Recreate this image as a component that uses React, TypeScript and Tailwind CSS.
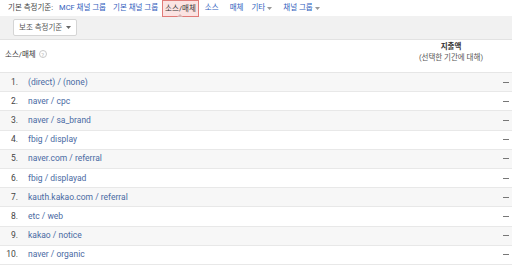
import React from "react";

const ROWS = [
  "(direct) / (none)",
  "naver / cpc",
  "naver / sa_brand",
  "fbig / display",
  "naver.com / referral",
  "fbig / displayad",
  "kauth.kakao.com / referral",
  "etc / web",
  "kakao / notice",
  "naver / organic",
];

const FONT = { fontFamily: "Roboto, 'Noto Sans CJK KR', sans-serif" };

function Caret({ className = "" }: { className?: string }) {
  return (
    <svg width="5" height="3" viewBox="0 0 5 3" className={className}>
      <path d="M0 0h5L2.5 3z" fill="currentColor" />
    </svg>
  );
}

export default function App() {
  return (
    <div className="w-[512px] h-[268px] overflow-hidden bg-white text-[#333]" style={FONT}>
      {/* dimension tabs */}
      <div className="flex items-center h-4 pl-2 text-[7.5px] leading-none">
        <span className="text-[#444]">기본 측정기준:</span>
        <span className="ml-[6px] text-[#3160bd]">MCF 채널 그룹</span>
        <span className="ml-[7px] text-[#3160bd]">기본 채널 그룹</span>
        <span className="relative ml-[4px] flex h-[17px] items-center self-start border border-[#e07b78] bg-[#fbe3e2] px-[2px] text-[#333] z-10">
          소스/매체
          <span className="absolute bottom-[-1px] left-1/2 -translate-x-1/2 h-0 w-0 border-x-[3px] border-b-[3px] border-x-transparent border-b-[#d9b3b2]" />
        </span>
        <span className="ml-[6px] text-[#3160bd]">소스</span>
        <span className="ml-[11px] text-[#3160bd]">매체</span>
        <span className="ml-[8px] flex items-center gap-[2px] text-[#3160bd]">
          기타 <Caret className="text-[#999]" />
        </span>
        <span className="ml-[11px] flex items-center gap-[2px] text-[#3160bd]">
          채널 그룹 <Caret className="text-[#999]" />
        </span>
      </div>

      {/* secondary dimension bar */}
      <div className="h-[24px] bg-[#f1f1f1] border-b border-[#e2e2e2] pl-[13px] pt-[3px]">
        <button className="flex h-[17px] w-[64px] items-center justify-between rounded-[2px] border border-[#d5d5d5] bg-white pl-[5px] pr-[5px] text-[7.5px] text-[#555]">
          보조 측정기준
          <Caret className="text-[#666]" />
        </button>
      </div>

      {/* header */}
      <div className="flex h-[33px] items-end justify-between border-b border-[#e6e6e6]">
        <div className="flex items-center gap-[3px] pl-[5px] pb-[12px] text-[7.5px] text-[#333]">
          소스/매체
          <span className="flex h-[8px] w-[8px] items-center justify-center rounded-full border border-[#c8c8c8] text-[6px] text-[#bbb]">
            ?
          </span>
        </div>
        <div className="mr-[11px] mb-[9px] w-[100px] text-center text-[7.5px] leading-[11px]">
          <div className="font-bold text-[#333]">지출액</div>
          <div className="text-[#555]">(선택한 기간에 대해)</div>
        </div>
      </div>

      {/* rows */}
      <div>
        {ROWS.map((r, i) => (
          <div
            key={r}
            className={`flex h-[19.2px] items-center border-b border-[#e8e8e8] text-[8.5px] ${
              i % 2 === 0 ? "bg-[#f7f7f7]" : "bg-white"
            }`}
          >
            <span className="w-[18px] text-right text-[#444]">{i + 1}.</span>
            <span className="ml-[10px] text-[#4a6aa3]">{r}</span>
            <span className="ml-auto mr-[3px] h-px w-[6px] bg-[#777]" />
          </div>
        ))}
      </div>
    </div>
  );
}
